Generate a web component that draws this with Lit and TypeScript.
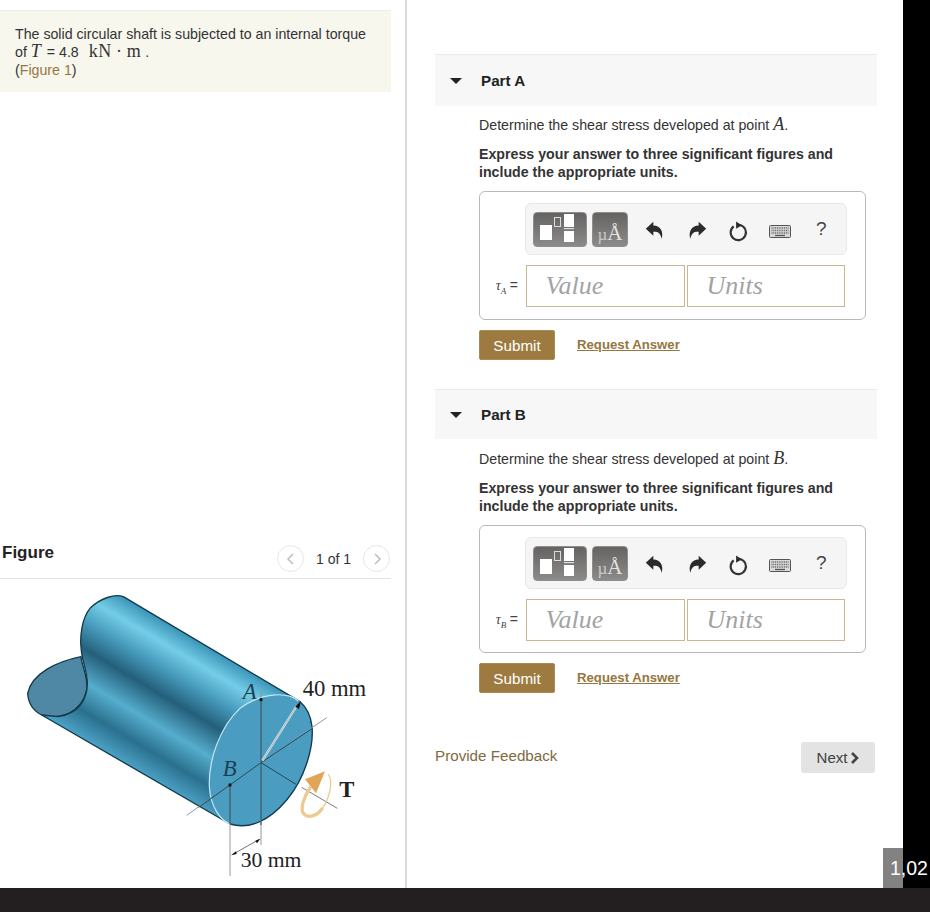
import { LitElement, html, css, svg } from "lit";
import { customElement } from "lit/decorators.js";

const figure = svg`
  <defs>
    <linearGradient id="band" gradientUnits="userSpaceOnUse" x1="635" y1="357" x2="418" y2="722">
      <stop offset="0" stop-color="#3a94b6"/>
      <stop offset="0.14" stop-color="#74cde8"/>
      <stop offset="0.3" stop-color="#4598b9"/>
      <stop offset="0.46" stop-color="#245f7a"/>
      <stop offset="0.66" stop-color="#56adcd"/>
      <stop offset="0.84" stop-color="#2a708e"/>
      <stop offset="1" stop-color="#4a9fc2"/>
    </linearGradient>
  </defs>
  <path d="M243 380 C170 395 95 430 83 490 C85 525 105 545 125 555 C180 570 245 550 260 480 C266 440 245 410 243 380Z" fill="#4f88a5" stroke="#123a4c" stroke-width="4"/>
  <path d="M370 200 C345 190 300 205 270 235 C245 265 240 320 243 350 C245 395 262 420 262 460 C262 510 235 550 175 560 L125 555 L690 882 L900 515Z" fill="url(#band)" stroke="none"/>
  <path d="M370 200 C345 190 300 205 270 235 C245 265 240 320 243 350 C245 395 262 420 262 460 C262 510 235 550 175 560 L125 555 M370 200 L900 515 M125 555 L690 882" fill="none" stroke="#123a4c" stroke-width="4"/>
  <path d="M900 515 C860 478 780 490 720 535 C660 590 625 690 628 770 C632 830 660 870 690 882 C750 900 810 870 860 810 C915 745 942 650 936 590 C932 555 918 530 900 515Z" fill="#4a9cc0"/>
  <path d="M895 513 C860 482 780 490 720 535 C660 590 625 690 628 770 C632 830 660 870 690 882" fill="none" stroke="#c9eaf4" stroke-width="3.5"/>
  <path d="M900 515 C918 530 932 555 936 590 C942 650 915 745 860 810 C810 870 750 900 690 882" fill="none" stroke="#123a4c" stroke-width="4"/>
  <path d="M560 856 L783 698 L980 563" fill="none" stroke="#8d9aa0" stroke-width="3"/>
  <path d="M596 832 L783 698 L936 596" fill="none" stroke="#1e4a5c" stroke-width="3"/>
  <path d="M783 478 L783 945" fill="none" stroke="#8d9aa0" stroke-width="3"/>
  <path d="M783 505 L783 885" fill="none" stroke="#1e4a5c" stroke-width="3"/>
  <path d="M690 765 L690 1038" fill="none" stroke="#9a9a9a" stroke-width="3"/>
  <path d="M690 765 L690 882" fill="none" stroke="#1e4a5c" stroke-width="3"/>
  <path d="M783 698 L888 763" fill="none" stroke="#1e4a5c" stroke-width="3"/>
  <path d="M905 772 L1012 835" fill="none" stroke="#7c7c7c" stroke-width="3"/>
  <path d="M787 692 L890 528" fill="none" stroke="#d8dfe2" stroke-width="7"/>
  <path d="M787 692 L890 528" fill="none" stroke="#7f9099" stroke-width="1.500"/>
  <path d="M886 530 L903 512 L897 537Z" fill="#111"/>
  <path d="M700 972 L778 928" fill="none" stroke="#555" stroke-width="2.5"/>
  <path d="M693 976 L708 964 L710 972Z M781 926 L766 932 L771 940Z" fill="#111"/>
  <circle cx="783" cy="509" r="5" fill="#111"/>
  <circle cx="690" cy="765" r="5" fill="#111"/>
  <path d="M932 770 C912 800 900 835 910 850 C922 866 950 860 968 834" fill="none" stroke="#ebcb92" stroke-width="10"/>
  <path d="M968 834 C990 800 1000 755 985 733" fill="none" stroke="#ebcb92" stroke-width="4"/>
  <path d="M975 724 L915 748 L948 790Z" fill="#e2a456"/>
  <text class="fig" x="908" y="497">40 mm</text>
  <text class="fig small" x="722" y="1010">30 mm</text>
  <text class="fig bold" x="1018" y="802">T</text>
  <text class="fig ital" x="728" y="507">A</text>
  <text class="fig ital" x="668" y="738">B</text>
`;

const undoIcon = html`<svg class="ico" viewBox="0 0 24 24"><path d="M10 6.500V2L1 10.500 10 19v-5c5.500-.4 8.500 1.600 10 8.500 2.500-8-1-15.800-10-16z"/></svg>`;
const redoIcon = html`<svg class="ico" viewBox="0 0 24 24"><path d="M14 6.500V2l9 8.500-9 8.500v-5c-5.500-.4-8.500 1.600-10 8.500-2.500-8 1-15.800 10-16z"/></svg>`;
const resetIcon = html`<svg class="ico big" viewBox="0 0 24 24"><path d="M13.500 5.200A8 8 0 1 1 7 6.600" fill="none" stroke="#333" stroke-width="2.200"/><path d="M9.500 1.500 15.500 5.500 9.500 9z"/></svg>`;
const keyboardIcon = html`<svg class="kbd" viewBox="0 0 22 13"><rect x=".5" y=".5" width="21" height="12" rx="1" fill="#d9d9d9" stroke="#555"/><path d="M2.500 3h17M2.500 5.500h17M2.500 8h17" stroke="#666" stroke-width="1.300" stroke-dasharray="1 .8"/><path d="M6 10.500h10" stroke="#555" stroke-width="1.300"/></svg>`;

@customElement("app-root")
export class AppRoot extends LitElement {
  static styles = css`
    :host {
      display: block;
      width: 930px;
      height: 912px;
      position: relative;
      overflow: hidden;
      font-family: "Liberation Sans", Arial, sans-serif;
      font-size: 14.2px;
      color: #333;
      background: #fff;
    }
    * { box-sizing: border-box; }
    .main { display: flex; height: 888px; }
    .left {
      width: 407px;
      flex: none;
      border-right: 2px solid #dcd9d6;
      padding-top: 10px;
    }
    .statement {
      width: 391px;
      height: 82px;
      background: #f7f7ee;
      border-top: 1px solid #efefe8;
      padding: 14px 15px 0;
      line-height: 18px;
    }
    .statement .m { font-family: "Liberation Serif", serif; font-size: 18px; line-height: 0; }
    .statement .m.i { font-style: italic; margin-right: 6px; }
    .statement .unit { margin-left: 6px; letter-spacing: .6px; word-spacing: -1px; }
    .link { color: #96763d; }
    .fig-head {
      width: 391px;
      height: 42px;
      margin-top: 445px;
      border-bottom: 1px solid #e3e3e3;
      display: flex;
      align-items: flex-start;
    }
    .fig-title {
      font-weight: 700;
      font-size: 17px;
      color: #222;
      margin-left: 2px;
      line-height: 20px;
      margin-top: 6px;
    }
    .pager { margin-left: auto; display: flex; align-items: center; gap: 11px; margin-top: 8px; margin-right: 1px; }
    .pager span { font-size: 14px; width: 37px; text-align: center; }
    .circ {
      width: 27px;
      height: 27px;
      border: 1px solid #e6e6e6;
      border-radius: 50%;
      display: flex;
      align-items: center;
      justify-content: center;
    }
    .circ svg { width: 10px; height: 12px; fill: none; stroke: #bdbdbd; stroke-width: 1.500; }
    .shaft { display: block; width: 400px; height: 300px; margin-top: 6px; }
    .fig { font-family: "Liberation Serif", serif; font-size: 68px; fill: #222; }
    .small { font-size: 65px; }
    .bold { font-weight: 700; }
    .ital { font-style: italic; fill: #1c3f50; }

    .right { flex: 1; padding: 54px 26px 0 28px; min-width: 0; }
    .part-head {
      height: 52px;
      border-top: 1px solid #eaeaea;
      background: #f7f7f7;
      display: flex;
      align-items: center;
      padding-left: 15px;
      gap: 19px;
      font-weight: 700;
      font-size: 15.2px;
      color: #222;
    }
    .tri { width: 0; height: 0; border-left: 6px solid transparent; border-right: 6px solid transparent; border-top: 6px solid #222; }
    .part-body { padding-left: 44px; }
    .q { margin-top: 10px; line-height: 18px; color: #333; }
    .q .m { font-family: "Liberation Serif", serif; font-style: italic; font-size: 18px; line-height: 0; }
    .ins { margin-top: 11px; font-weight: 700; line-height: 18px; color: #333; }
    .answer {
      margin-top: 10px;
      width: 387px;
      height: 129px;
      border: 1px solid #b9b9b9;
      border-radius: 6px;
      padding: 11px 18px 0 9px;
    }
    .toolbar {
      margin-left: 36px;
      width: 322px;
      height: 52px;
      background: #f5f5f5;
      border: 1px solid #e8e8e8;
      border-radius: 6px;
      display: flex;
      align-items: center;
      padding-left: 7px;
    }
    .tb-btn {
      height: 35px;
      border-radius: 4px;
      background: linear-gradient(#656262, #8d8a8a);
      border: 1px solid #8f8d8d;
      flex: none;
    }
    .tpl { width: 54px; }
    .tpl svg { width: 52px; height: 33px; display: block; }
    .mu {
      width: 36px;
      margin-left: 5px;
      font-family: "Liberation Serif", serif;
      line-height: 40px;
      text-align: center;
      white-space: nowrap;
    }
    .mu .a { color: #e3e3e3; font-size: 21px; }
    .mu .u { color: #cacaca; font-size: 17px; }
    .tool { flex: none; width: 41.500px; display: flex; justify-content: center; align-items: center; }
    .first { margin-left: 6.500px; }
    .ico { width: 20px; height: 20px; fill: #2b2b2b; margin-top: 2px; }
    .ico.big { width: 23px; height: 23px; margin-top: 5px; }
    .kbd { width: 22px; height: 13px; margin-top: 5px; }
    .help { font-size: 19px; color: #444; margin-top: 0; }
    .row { display: flex; align-items: center; margin-top: 10px; height: 42px; }
    .lbl {
      width: 37px;
      flex: none;
      text-align: right;
      padding-right: 8px;
      font-size: 14px;
      color: #444;
      font-family: "Liberation Serif", serif;
      white-space: nowrap;
    }
    .lbl sub { font-size: 9px; font-style: italic; }
    .lbl .e { font-family: "Liberation Sans", sans-serif; font-size: 14px; }
    .box {
      width: 159px;
      height: 42px;
      border: 1.500px solid #c9b88f;
      font-family: "Liberation Serif", serif;
      font-style: italic;
      font-size: 26px;
      color: #a3a3a3;
      padding-left: 18.500px;
      line-height: 40px;
      background: #fff;
    }
    .box + .box { margin-left: 2px; width: 158px; }
    .actions { display: flex; align-items: center; margin-top: 10px; gap: 22px; }
    .submit {
      width: 76px;
      height: 30px;
      background: #9d7a3f;
      border: 1px solid #a98a52;
      border-radius: 2px;
      color: #fff;
      font-size: 15.200px;
      line-height: 29px;
      text-align: center;
    }
    .req { font-size: 13.200px; font-weight: 700; color: #96763d; text-decoration: underline; margin-top: -2px; }
    .part-b { margin-top: 29px; }
    .part-b .part-head { height: 50px; }
    .part-b .q { margin-top: 11px; }
    .part-b .answer { height: 128px; }
    .footer { display: flex; align-items: center; justify-content: space-between; margin-top: 49px; padding-right: 2px; }
    .feedback { color: #7f6a3f; font-size: 15.200px; margin-top: -4px; }
    .next {
      width: 74px;
      height: 31px;
      background: #e3e3e3;
      border-radius: 3px;
      display: flex;
      align-items: center;
      justify-content: center;
      gap: 3px;
      color: #3f3f3f;
      font-size: 15px;
    }
    .next svg { width: 9px; height: 12px; fill: none; stroke: #444; stroke-width: 2.600; }
    .black { width: 27px; flex: none; background: #000; }
    .bottom { height: 24px; background: #231f20; }
    .count {
      position: absolute;
      left: 883px;
      top: 848px;
      width: 47px;
      height: 40px;
      color: #fff;
      font-size: 19.500px;
      line-height: 40px;
      padding-left: 7px;
      white-space: nowrap;
      overflow: hidden;
      background: linear-gradient(to right, #828282 20px, transparent 20px);
    }
  `;

  private part(letter: string, extra: string) {
    return html`
      <section class=${extra}>
        <div class="part-head"><div class="tri"></div><div>Part ${letter}</div></div>
        <div class="part-body">
          <div class="q">Determine the shear stress developed at point <span class="m">${letter}</span>.</div>
          <div class="ins">Express your answer to three significant figures and<br />include the appropriate units.</div>
          <div class="answer">
            <div class="toolbar">
              <div class="tb-btn tpl">
                <svg viewBox="1 1 52 33">
                  <rect x="7" y="13" width="12" height="15" fill="#fff"/>
                  <rect x="21.500" y="5.500" width="6" height="9" fill="none" stroke="#ddd" stroke-width="1"/>
                  <rect x="31" y="2" width="10" height="13" fill="#fff"/>
                  <rect x="31" y="16" width="10" height="1.200" fill="#ddd"/>
                  <rect x="31" y="19" width="10" height="11" fill="#fff"/>
                </svg>
              </div>
              <div class="tb-btn mu"><span class="u">µ</span><span class="a">Å</span></div>
              <div class="tool first">${undoIcon}</div>
              <div class="tool">${redoIcon}</div>
              <div class="tool">${resetIcon}</div>
              <div class="tool">${keyboardIcon}</div>
              <div class="tool help">?</div>
            </div>
            <div class="row">
              <div class="lbl"><i>τ</i><sub>${letter}</sub> <span class="e">=</span></div>
              <div class="box">Value</div>
              <div class="box">Units</div>
            </div>
          </div>
          <div class="actions">
            <div class="submit">Submit</div>
            <div class="req">Request Answer</div>
          </div>
        </div>
      </section>
    `;
  }

  render() {
    return html`
      <div class="main">
        <div class="left">
          <div class="statement">
            The solid circular shaft is subjected to an internal torque<br />
            of <span class="m i">T</span><span>= 4.8</span> <span class="m unit">kN · m</span> .<br />
            (<span class="link">Figure 1</span>)
          </div>
          <div class="fig-head">
            <div class="fig-title">Figure</div>
            <div class="pager">
              <div class="circ"><svg viewBox="0 0 10 12"><path d="M7 1 2 6l5 5"/></svg></div>
              <span>1 of 1</span>
              <div class="circ"><svg viewBox="0 0 10 12"><path d="M3 1l5 5-5 5"/></svg></div>
            </div>
          </div>
          <svg class="shaft" viewBox="0 165 1200 900">${figure}</svg>
        </div>
        <div class="right">
          ${this.part("A", "part-a")}
          ${this.part("B", "part-b")}
          <div class="footer">
            <div class="feedback">Provide Feedback</div>
            <div class="next">Next <svg viewBox="0 0 9 12"><path d="M2 1l5 5-5 5"/></svg></div>
          </div>
        </div>
        <div class="black"></div>
      </div>
      <div class="bottom"></div>
      <div class="count">1,02</div>
    `;
  }
}
